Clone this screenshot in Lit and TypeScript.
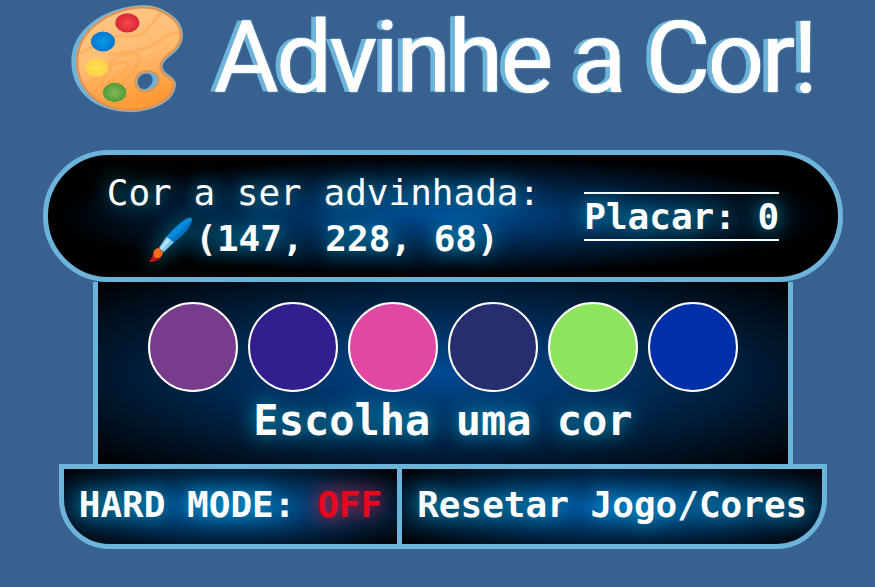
import { LitElement, html, css } from "lit";
import { customElement, state } from "lit/decorators.js";
import { styleMap } from "lit/directives/style-map.js";

const COLORS = [
  "rgb(120, 60, 140)",
  "rgb(50, 30, 142)",
  "rgb(224, 72, 164)",
  "rgb(38, 46, 110)",
  "rgb(142, 228, 92)",
  "rgb(0, 48, 168)",
];

@customElement("app-root")
export class AppRoot extends LitElement {
  @state() private target = "(147, 228, 68)";
  @state() private score = 0;
  @state() private hard = false;

  static styles = css`
    :host {
      --line: #6cb4da;
      --glow: #00b4dc;
      display: block;
      box-sizing: border-box;
      min-height: 100vh;
      padding: 0 0 38px 11px;
      background: #39618f;
      color: #fff;
      font-family: "DejaVu Sans Mono", "Liberation Mono", monospace;
      font-size: 36px;
    }
    * {
      box-sizing: border-box;
    }
    .title {
      display: flex;
      justify-content: center;
      gap: 29px;
      margin: 0 0 34px;
      font: 400 100px/116px Roboto, sans-serif;
      letter-spacing: -3px;
      white-space: nowrap;
      text-shadow: 0 0 1px #fff, -5px 0 0 var(--line), 0 0 2px var(--line);
    }
    .palette {
      flex: none;
      width: 114px;
      height: 109px;
      margin-top: 4px;
    }
    .game {
      display: flex;
      flex-direction: column;
      align-items: center;
    }
    .panel {
      display: flex;
      align-items: center;
      justify-content: center;
      gap: 44px;
      width: 100%;
      max-width: 800px;
      padding: 15px;
      border: 5px solid var(--line);
      border-radius: 100px;
      background: radial-gradient(#004a94, #000 70%);
      text-shadow: 0 0 20px var(--glow);
      white-space: nowrap;
    }
    .guess {
      margin: 0;
      text-align: center;
      line-height: 46px;
    }
    .value {
      display: flex;
      align-items: center;
      justify-content: center;
      gap: 2px;
      font-weight: 700;
    }
    .brush {
      width: 45px;
      height: 45px;
      overflow: visible;
      filter: drop-shadow(0 0 10px #007f9f);
    }
    .score {
      margin: 0;
      border: solid #fff;
      border-width: 2px 0;
      font-weight: 700;
      line-height: 45px;
    }
    .board {
      width: 88%;
      max-width: 700px;
      padding: 20px 15px 15px;
      border: solid var(--line);
      border-width: 0 5px;
      background: radial-gradient(#004a94, #000);
    }
    .swatches {
      display: flex;
      justify-content: center;
      gap: 10px;
    }
    .swatch {
      width: 90px;
      height: 90px;
      padding: 0;
      border: 2px solid #fff;
      border-radius: 50%;
      cursor: pointer;
    }
    .message {
      margin: 0;
      font-size: 42px;
      font-weight: 700;
      line-height: 57px;
      text-align: center;
      text-shadow: 0 0 20px var(--glow);
    }
    .actions {
      display: flex;
      border: 5px solid var(--line);
      border-radius: 0 0 50px 50px;
      background: var(--line);
      gap: 5px;
      overflow: hidden;
    }
    .action {
      padding: 0 15px 4px;
      border: 0;
      background: radial-gradient(#005aa8, #000);
      color: inherit;
      font: inherit;
      font-weight: 700;
      line-height: 71px;
      white-space: nowrap;
      text-shadow: 0 0 20px var(--glow);
      cursor: pointer;
    }
    .mode {
      color: #e8081e;
      text-shadow: 0 0 20px #ff2040;
    }
  `;

  private renderPalette() {
    const body =
      "M240 18C300 14 366 55 366 104C366 160 306 166 305 198C304 226 345 226 345 252C343 306 270 333 210 333C118 333 48 272 48 184C48 84 150 24 240 18ZM262 217C243 217 230 229 230 245C230 260 241 270 254 270C272 270 288 257 292 243C294 227 281 217 262 217Z";
    return html`
      <svg class="palette" viewBox="33 12 342 326" aria-hidden="true">
        <defs>
          <linearGradient id="wood" x1="0" y1="0" x2="0.3" y2="1">
            <stop offset="0" stop-color="#ffc888" />
            <stop offset="0.55" stop-color="#ffbd74" />
            <stop offset="1" stop-color="#ff9a35" />
          </linearGradient>
          <radialGradient id="red"><stop offset="0" stop-color="#f94850" /><stop offset="1" stop-color="#d92635" /></radialGradient>
          <radialGradient id="blue"><stop offset="0" stop-color="#0a9bea" /><stop offset="1" stop-color="#0475cf" /></radialGradient>
          <radialGradient id="yellow"><stop offset="0" stop-color="#ffe14d" /><stop offset="1" stop-color="#f9d34a" /></radialGradient>
          <radialGradient id="green"><stop offset="0" stop-color="#80b858" /><stop offset="1" stop-color="#549a38" /></radialGradient>
          <clipPath id="shape"><path clip-rule="evenodd" d=${body} /></clipPath>
        </defs>
        <path transform="translate(-14 0)" fill="#6cb4da" fill-rule="evenodd" d=${body} />
        <path fill="#6cb4da" stroke="#6cb4da" stroke-width="6" fill-rule="evenodd" d=${body} />
        <path fill="url(#wood)" fill-rule="evenodd" d=${body} />
        <g clip-path="url(#shape)" fill="none" stroke="#ff9f45" stroke-opacity="0.4" stroke-width="10">
          <path d="M58 160C110 140 150 100 200 108S270 80 300 40" />
          <path d="M70 250C110 260 130 180 190 165S240 175 225 205S180 240 130 300" />
          <path d="M90 282C140 260 120 205 175 188C205 180 215 195 190 215S130 250 115 305" />
          <path d="M145 165C200 150 250 160 300 120S350 110 370 100" />
          <path d="M190 325C210 285 270 300 320 265" />
        </g>
        <path clip-path="url(#shape)" fill="none" stroke="#d9935a" stroke-width="14" d=${body} />
        <ellipse cx="202" cy="68" rx="36" ry="29" fill="url(#red)" />
        <ellipse cx="129" cy="124" rx="36" ry="30" fill="url(#blue)" />
        <ellipse cx="110" cy="202" rx="34" ry="28" fill="url(#yellow)" />
        <ellipse cx="164" cy="277" rx="35" ry="29" fill="url(#green)" />
        <path fill="#6cb4da" d="M276 219Q298 226 291 246Q284 262 266 268Q288 245 276 219Z" />
      </svg>
    `;
  }

  private renderBrush() {
    return html`
      <svg class="brush" viewBox="360 227 135 135" aria-hidden="true">
        <path fill="#078bdd" d="M414 288Q452 243 481 229Q492 226 492 237Q484 266 437 303Z" />
        <path fill="#0673c6" d="M426 297Q466 262 491 236Q488 265 437 303Z" />
        <path fill="#7cc4ec" d="M415 286L438 303L407 333L393 319Z" />
        <path fill="#b5e2f8" d="M419 290L427 296L402 327L396 321Z" />
        <path fill="#b7141c" d="M360 361Q371 355 374 340Q378 330 389 334L400 348Q388 364 360 361Z" />
        <path fill="#fb6d1c" d="M376 333Q382 319 394 320L405 333Q404 347 390 350Q384 347 380 349Q376 343 376 333Z" />
      </svg>
    `;
  }

  render() {
    return html`
      <h1 class="title">${this.renderPalette()}<span>Advinhe a Cor!</span></h1>
      <main class="game">
        <section class="panel">
          <p class="guess">
            Cor a ser advinhada:
            <span class="value">${this.renderBrush()}${this.target}</span>
          </p>
          <p class="score">Placar: ${this.score}</p>
        </section>
        <section class="board">
          <div class="swatches">
            ${COLORS.map(
              (color, i) => html`
                <button
                  class="swatch"
                  type="button"
                  aria-label="Cor ${i + 1}"
                  style=${styleMap({ backgroundColor: color })}
                ></button>
              `
            )}
          </div>
          <p class="message">Escolha uma cor</p>
        </section>
        <div class="actions">
          <button class="action" type="button" @click=${() => (this.hard = !this.hard)}>
            HARD MODE: <span class="mode">${this.hard ? "ON" : "OFF"}</span>
          </button>
          <button class="action" type="button" @click=${() => (this.score = 0)}>Resetar Jogo/Cores</button>
        </div>
      </main>
    `;
  }
}
